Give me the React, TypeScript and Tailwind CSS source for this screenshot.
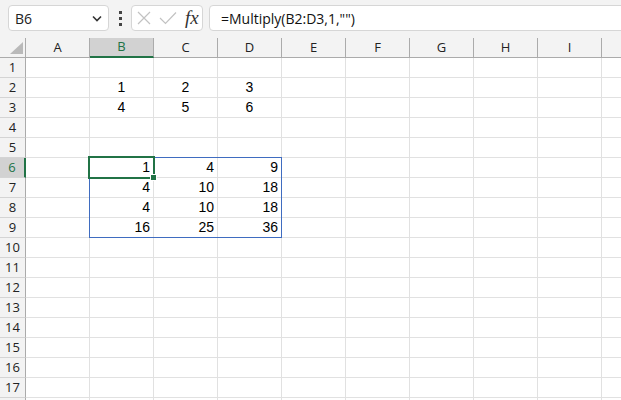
import React from "react";

const cols = ["A", "B", "C", "D", "E", "F", "G", "H", "I", ""];

type Cell = { v: string; align: "center" | "right" };

// row -> column index (0 = A) -> value
const data: Record<number, Record<number, Cell>> = {
  2: { 1: { v: "1", align: "center" }, 2: { v: "2", align: "center" }, 3: { v: "3", align: "center" } },
  3: { 1: { v: "4", align: "center" }, 2: { v: "5", align: "center" }, 3: { v: "6", align: "center" } },
  6: { 1: { v: "1", align: "right" }, 2: { v: "4", align: "right" }, 3: { v: "9", align: "right" } },
  7: { 1: { v: "4", align: "right" }, 2: { v: "10", align: "right" }, 3: { v: "18", align: "right" } },
  8: { 1: { v: "4", align: "right" }, 2: { v: "10", align: "right" }, 3: { v: "18", align: "right" } },
  9: { 1: { v: "16", align: "right" }, 2: { v: "25", align: "right" }, 3: { v: "36", align: "right" } },
};

const rows = Array.from({ length: 18 }, (_, i) => i + 1);

function FormulaBar() {
  return (
    <div className="h-[38px] bg-[#f3f3f3] flex items-start pt-[5px] pl-[8px]">
      {/* Name box */}
      <div className="w-[101px] h-[26px] rounded-[4px] border border-[#d6d6d6] bg-white flex items-center pl-[6px] pr-[6px] text-[14px] text-[#222]">
        <span className="flex-1">B6</span>
        <svg width="10" height="7" viewBox="0 0 10 7">
          <path d="M1 1.5 L5 5.5 L9 1.5" fill="none" stroke="#333" strokeWidth="1.6" />
        </svg>
      </div>
      {/* dots */}
      <div className="w-[22px] h-[26px] flex flex-col items-center justify-center gap-[3px]">
        <div className="w-[3px] h-[3px] bg-[#444]" />
        <div className="w-[3px] h-[3px] bg-[#444]" />
        <div className="w-[3px] h-[3px] bg-[#444]" />
      </div>
      {/* cancel / enter / fx */}
      <div className="w-[72px] h-[26px] rounded-[4px] border border-[#d6d6d6] bg-white flex items-center pl-[5px]">
        <svg width="14" height="14" viewBox="0 0 14 14">
          <path d="M1 1 L13 13 M13 1 L1 13" stroke="#c2c2c2" strokeWidth="1.2" />
        </svg>
        <svg width="18" height="14" viewBox="0 0 18 14" className="ml-[8px]">
          <path d="M1 7 L6.5 12.5 L17 1.5" fill="none" stroke="#c2c2c2" strokeWidth="1.2" />
        </svg>
        <span
          className="ml-[8px] text-[19px] italic text-[#333] leading-none -mt-[2px]"
          style={{ fontFamily: '"Liberation Serif", serif' }}
        >
          fx
        </span>
      </div>
      {/* formula */}
      <div className="ml-[6px] flex-1 -mr-[8px] h-[26px] rounded-[4px] border border-[#d6d6d6] bg-white flex items-center pl-[11px] text-[14px] text-[#111]">
        =Multiply(B2:D3,1,"")
      </div>
    </div>
  );
}

export default function App() {
  return (
    <div
      className="w-[621px] h-[400px] overflow-hidden bg-white"
      style={{ fontFamily: '"Open Sans", "Liberation Sans", sans-serif' }}
    >
      <FormulaBar />
      <div className="relative">
        <div className="grid grid-cols-[26px_repeat(9,64px)_40px] auto-rows-[20px]">
          {/* header row */}
          <div className="relative bg-[#f3f3f3] border-r border-b border-[#ababab]">
            <svg width="13" height="12" viewBox="0 0 13 12" className="absolute right-[2px] bottom-[3px]">
              <path d="M13 0 L13 12 L0 12 Z" fill="#b9b9b9" />
            </svg>
          </div>
          {cols.map((c, i) =>
            c === "B" ? (
              <div
                key={i}
                className="bg-[#d2d2d2] border-r border-[#ababab] border-b-2 border-b-[#217346] flex items-center justify-center text-[13px] text-[#217346]"
              >
                {c}
              </div>
            ) : (
              <div
                key={i}
                className="bg-[#f3f3f3] border-r border-b border-[#ababab] flex items-center justify-center text-[13px] text-[#222]"
              >
                {c}
              </div>
            )
          )}

          {rows.map((r) => (
            <React.Fragment key={r}>
              {r === 6 ? (
                <div className="bg-[#d2d2d2] border-r-2 border-r-[#217346] border-b border-b-[#d4d4d4] flex items-center justify-center text-[13px] text-[#217346]">
                  {r}
                </div>
              ) : (
                <div className="bg-[#f3f3f3] border-r border-r-[#ababab] border-b border-b-[#d4d4d4] flex items-center justify-center text-[13px] text-[#222]">
                  {r <= 17 ? r : ""}
                </div>
              )}
              {cols.map((_, ci) => {
                const cell = data[r]?.[ci];
                return (
                  <div
                    key={ci}
                    className={`border-r border-b border-[#e1e1e1] flex items-end text-[14px] leading-[19px] text-black ${
                      cell?.align === "right" ? "justify-end pr-[3px]" : "justify-center"
                    }`}
                    style={{ fontFamily: '"Liberation Sans", sans-serif' }}
                  >
                    {cell?.v}
                  </div>
                );
              })}
            </React.Fragment>
          ))}
        </div>

        {/* range border B6:D9 */}
        <div className="absolute left-[89px] top-[119px] w-[193px] h-[81px] border border-[#3f6cc0] pointer-events-none" />
        {/* active cell */}
        <div className="absolute left-[88px] top-[118px] w-[67px] h-[23px] border-2 border-[#217346] pointer-events-none" />
        <div className="absolute left-[150px] top-[136px] w-[7px] h-[7px] bg-[#217346] border border-white" />
      </div>
    </div>
  );
}
